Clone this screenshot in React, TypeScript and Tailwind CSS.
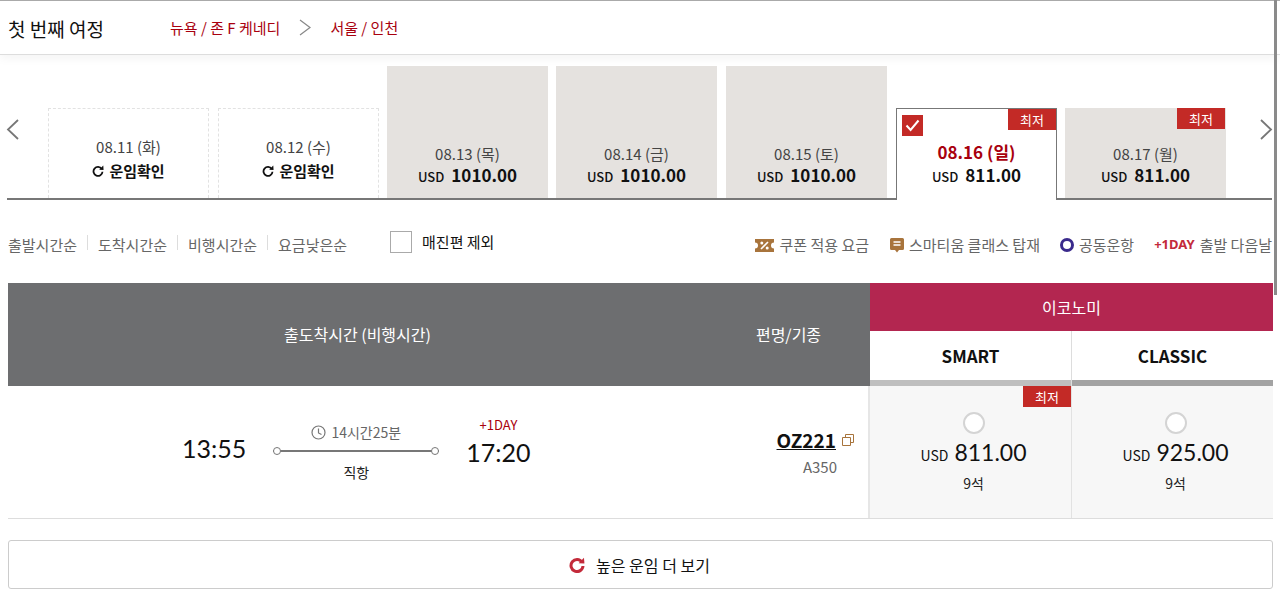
const KR = "font-['Noto_Sans_CJK_KR','Noto_Sans',sans-serif]";

const Lowest = ({ className }: { className: string }) => (
  <span className={`absolute flex items-center justify-center bg-[#c32a26] text-[13px] text-white ${className}`}>
    최저
  </span>
);

const Reload = ({ size = 12, color = "#111", width = 2.4 }: { size?: number; color?: string; width?: number }) => (
  <svg width={size} height={size} viewBox="0 0 16 16" fill="none">
    <path d="M13 5.2A6 6 0 1 0 14 9" stroke={color} strokeWidth={width} />
    <path d="M9.6 6.2 15.4 6.6 15 0.8Z" fill={color} />
  </svg>
);

const Arrow = ({ dir, className }: { dir: "left" | "right"; className: string }) => (
  <svg width="13" height="21" viewBox="0 0 13 21" fill="none" stroke="#777" strokeWidth="1.8" className={className}>
    <path d={dir === "left" ? "M12 1 2 10.5 12 20" : "M1 1 11 10.5 1 20"} />
  </svg>
);

const Dashed = ({ date, className = "" }: { date: string; className?: string }) => (
  <div
    className={`flex h-[90px] w-[161px] flex-col items-center border border-b-0 border-dashed border-[#e2e2e2] pt-[28px] ${className}`}
  >
    <span className="text-[15px] leading-[20px] text-[#444]">{date}</span>
    <span className="mt-[4px] flex items-center gap-[5px] text-[15px] leading-[20px] font-bold text-[#111]">
      <Reload />
      운임확인
    </span>
  </div>
);

const Fare = ({
  date,
  price,
  tall,
  low,
  className = "",
}: {
  date: string;
  price: string;
  tall?: boolean;
  low?: boolean;
  className?: string;
}) => (
  <div
    className={`relative flex w-[161px] flex-col items-center justify-end bg-[#e5e2df] pb-[10px] ${
      tall ? "h-[132px]" : "h-[90px]"
    } ${className}`}
  >
    {low && <Lowest className="top-0 right-[1px] h-[21px] w-[48px]" />}
    <span className="translate-y-[1px] text-[15px] leading-[20px] text-[#444]">{date}</span>
    <span className="mt-[1px] flex items-baseline gap-[7px] leading-[22px] text-[#111]">
      <span className="text-[13px] font-medium">USD</span>
      <span className="text-[17px] font-bold">{price}</span>
    </span>
  </div>
);

const Selected = ({ className = "" }: { className?: string }) => (
  <div
    className={`relative z-10 -mb-[2px] flex h-[92px] w-[161px] flex-col items-center border border-b-0 border-[#777] bg-white pt-[31px] ${className}`}
  >
    <span className="absolute top-[6px] left-[5px] flex h-[21px] w-[21px] items-center justify-center bg-[#c32a26]">
      <svg width="15" height="13" viewBox="0 0 15 13" fill="none">
        <path d="M1.5 6.5 5.6 11 13.5 1.5" stroke="#fff" strokeWidth="2" />
      </svg>
    </span>
    <Lowest className="top-0 right-0 h-[21px] w-[48px]" />
    <span className="text-[17px] leading-[24px] font-bold text-[#a8000e]">08.16 (일)</span>
    <span className="flex items-baseline gap-[7px] leading-[22px] text-[#111]">
      <span className="text-[13px] font-medium">USD</span>
      <span className="text-[17px] font-bold">811.00</span>
    </span>
  </div>
);

const Sort = ({ label, first }: { label: string; first?: boolean }) => (
  <span className="flex items-center">
    {!first && <span className="mr-[10px] ml-[10px] -mt-[5px] h-[15px] w-px bg-[#ddd]" />}
    {label}
  </span>
);

const PriceCell = ({ price, low }: { price: string; low?: boolean }) => (
  <div className="relative flex flex-1 flex-col items-center bg-[#f7f7f7] pt-[26px] pl-[6px]">
    {low && <Lowest className="top-0 right-0 h-[21px] w-[48px]" />}
    <span className="h-[22px] w-[22px] rounded-full border-2 border-[#d4d4d4] bg-white" />
    <span className="mt-[2px] flex items-baseline gap-[6px] leading-[32px] text-[#111]">
      <span className="text-[14px]">USD</span>
      <span className="font-['Lato',sans-serif] text-[23px]">{price}</span>
    </span>
    <span className="mt-[2px] text-[14px] leading-[20px] text-[#222]">9석</span>
  </div>
);

export default function App() {
  return (
    <div className={`relative h-[607px] w-[1280px] overflow-hidden bg-white ${KR}`}>
      {/* page scrollbar */}
      <div className="absolute top-0 right-[3px] z-20 h-[295px] w-[3px] bg-[#8a8a8a]" />

      <header className="flex h-[55px] items-center border-t border-b border-t-[#aaa] border-b-[#ddd] pr-[8px] pl-[8px] shadow-[0_3px_10px_rgba(0,0,0,0.05)]">
        <h1 className="w-[162px] translate-y-[1px] text-[19px] leading-[26px] text-[#111]">첫 번째 여정</h1>
        <span className="translate-y-[1px] text-[15px] text-[#a8000e]">뉴욕 / 존 F 케네디</span>
        <svg width="12" height="17" viewBox="0 0 12 17" fill="none" stroke="#888" strokeWidth="1.2" className="mr-[19px] ml-[19px]">
          <path d="M1 1 11 8.5 1 16" />
        </svg>
        <span className="translate-y-[1px] text-[15px] text-[#a8000e]">서울 / 인천</span>
      </header>

      {/* date tabs */}
      <div className="mt-[11px] ml-[7px] flex h-[134px] w-[1265px] items-end border-b-2 border-[#777]">
        <Arrow dir="left" className="mb-[58px] -ml-px shrink-0" />
        <div className="ml-[29px] flex items-end gap-[8px]">
          <Dashed date="08.11 (화)" />
          <Dashed date="08.12 (수)" className="ml-px" />
          <Fare date="08.13 (목)" price="1010.00" tall />
          <Fare date="08.14 (금)" price="1010.00" tall />
          <Fare date="08.15 (토)" price="1010.00" tall className="ml-px" />
          <Selected className="ml-px" />
          <Fare date="08.17 (월)" price="811.00" low />
        </div>
        <Arrow dir="right" className="mb-[58px] ml-[34px] shrink-0" />
      </div>

      {/* sort + legend */}
      <div className="mt-[31px] flex h-[22px] w-[1272px] items-center pl-[8px] text-[15px] whitespace-nowrap text-[#666]">
        <div className="flex translate-y-[3px] items-center">
          <Sort label="출발시간순" first />
          <Sort label="도착시간순" />
          <Sort label="비행시간순" />
          <Sort label="요금낮은순" />
        </div>
        <span className="ml-[43px] h-[22px] w-[22px] border border-[#aaa] bg-white" />
        <span className="ml-[10px] text-[#111]">매진편 제외</span>
        <div className="ml-auto flex translate-y-[3px] items-center">
          <svg width="19" height="13" viewBox="0 0 19 13" className="mr-[5px]">
            <path d="M0 0H19V3.5A3 3 0 0 0 19 9.5V13H0V9.5A3 3 0 0 0 0 3.5Z" fill="#a8743c" />
            <path d="M6 10 13 3" stroke="#fff" strokeWidth="1.6" />
            <circle cx="6.8" cy="4" r="1.5" fill="#fff" />
            <circle cx="12.2" cy="9" r="1.5" fill="#fff" />
          </svg>
          <span>쿠폰 적용 요금</span>
          <svg width="14" height="15" viewBox="0 0 14 15" className="mr-[5px] ml-[21px]">
            <path d="M1.5 0H12.5A1.5 1.5 0 0 1 14 1.5V10.5A1.5 1.5 0 0 1 12.5 12H9L7 14.5 5 12H1.5A1.5 1.5 0 0 1 0 10.5V1.5A1.5 1.5 0 0 1 1.5 0Z" fill="#a8743c" />
            <path d="M3.5 4H10.5M3.5 7H10.5" stroke="#fff" strokeWidth="1.3" />
          </svg>
          <span>스마티움 클래스 탑재</span>
          <span className="mr-[5px] ml-[20px] h-[14px] w-[14px] rounded-full border-[3px] border-[#3a2a8c]" />
          <span>공동운항</span>
          <span className="ml-[20px] font-['Noto_Sans',sans-serif] text-[13px] font-bold text-[#c32a3a]">+1DAY</span>
          <span className="ml-[5px]">출발 다음날</span>
        </div>
      </div>

      {/* table head */}
      <div className="mt-[30px] mr-[7px] ml-[8px] flex h-[103px] text-[16px] text-white">
        <div className="flex w-[699px] items-center justify-center bg-[#6d6e70] pb-[2px]">출도착시간 (비행시간)</div>
        <div className="flex w-[163px] items-center justify-center bg-[#6d6e70] pb-[2px]">편명/기종</div>
        <div className="flex flex-1 flex-col">
          <div className="flex h-[48px] items-center justify-center bg-[#b32650]">이코노미</div>
          <div className="flex flex-1 text-[17px] font-bold text-[#111]">
            <div className="flex flex-1 flex-col border-r border-[#ddd]">
              <span className="flex flex-1 items-center justify-center">SMART</span>
              <span className="h-[6px] bg-[#bfbfbf]" />
            </div>
            <div className="flex flex-1 flex-col">
              <span className="flex flex-1 items-center justify-center">CLASSIC</span>
              <span className="h-[6px] bg-[#a3a3a3]" />
            </div>
          </div>
        </div>
      </div>

      {/* flight row */}
      <div className="mr-[7px] ml-[8px] flex h-[133px] border-b border-[#ddd]">
        <div className="flex w-[699px] items-start pl-[174px]">
          <span className="mt-[45px] font-['Lato',sans-serif] text-[25px] leading-[34px] text-[#111]">13:55</span>
          <div className="mt-[36px] ml-[27px] flex w-[166px] flex-col items-center">
            <span className="flex h-[20px] items-center gap-[5px] text-[14px] text-[#666]">
              <svg width="15" height="15" viewBox="0 0 15 15" fill="none" stroke="#777" strokeWidth="1.2">
                <circle cx="7.5" cy="7.5" r="6.5" />
                <path d="M7.5 3.5V8L10.5 9.5" />
              </svg>
              14시간25분
            </span>
            <span className="relative mt-[8px] h-[2px] w-full bg-[#777]">
              <span className="absolute -top-[3px] left-0 h-[8px] w-[8px] rounded-full border border-[#777] bg-white" />
              <span className="absolute -top-[3px] right-0 h-[8px] w-[8px] rounded-full border border-[#777] bg-white" />
            </span>
            <span className="mt-[10px] text-[14px] leading-[20px] text-[#222]">직항</span>
          </div>
          <div className="mt-[29px] ml-[27px] flex flex-col items-center">
            <span className="text-[13px] leading-[20px] text-[#a8000e]">+1DAY</span>
            <span className="font-['Lato',sans-serif] text-[25px] leading-[34px] text-[#111]">17:20</span>
          </div>
        </div>
        <div className="flex w-[163px] flex-col items-end border-r-2 border-[#e6e6e6] pt-[41px] pr-[14px]">
          <div className="flex items-center gap-[6px]">
            <span className="text-[19px] leading-[26px] font-bold text-[#111] underline">OZ221</span>
            <svg width="12" height="12" viewBox="0 0 12 12" fill="none" stroke="#a8743c">
              <path d="M0.5 3.5H8.5V11.5H0.5Z" />
              <path d="M3.5 3.5V0.5H11.5V8.5H8.5" />
            </svg>
          </div>
          <span className="mt-[4px] mr-[17px] text-[15px] leading-[20px] text-[#666]">A350</span>
        </div>
        <div className="flex flex-1 divide-x divide-[#e2e2e2]">
          <PriceCell price="811.00" low />
          <PriceCell price="925.00" />
        </div>
      </div>

      <button className="mt-[21px] ml-[8px] flex h-[49px] w-[1265px] items-center justify-center gap-[11px] rounded-[3px] border border-[#ccc] bg-white pr-[2px] text-[16px] text-[#111]">
        <Reload size={16} color="#c32a3a" width={3} />
        높은 운임 더 보기
      </button>
    </div>
  );
}
